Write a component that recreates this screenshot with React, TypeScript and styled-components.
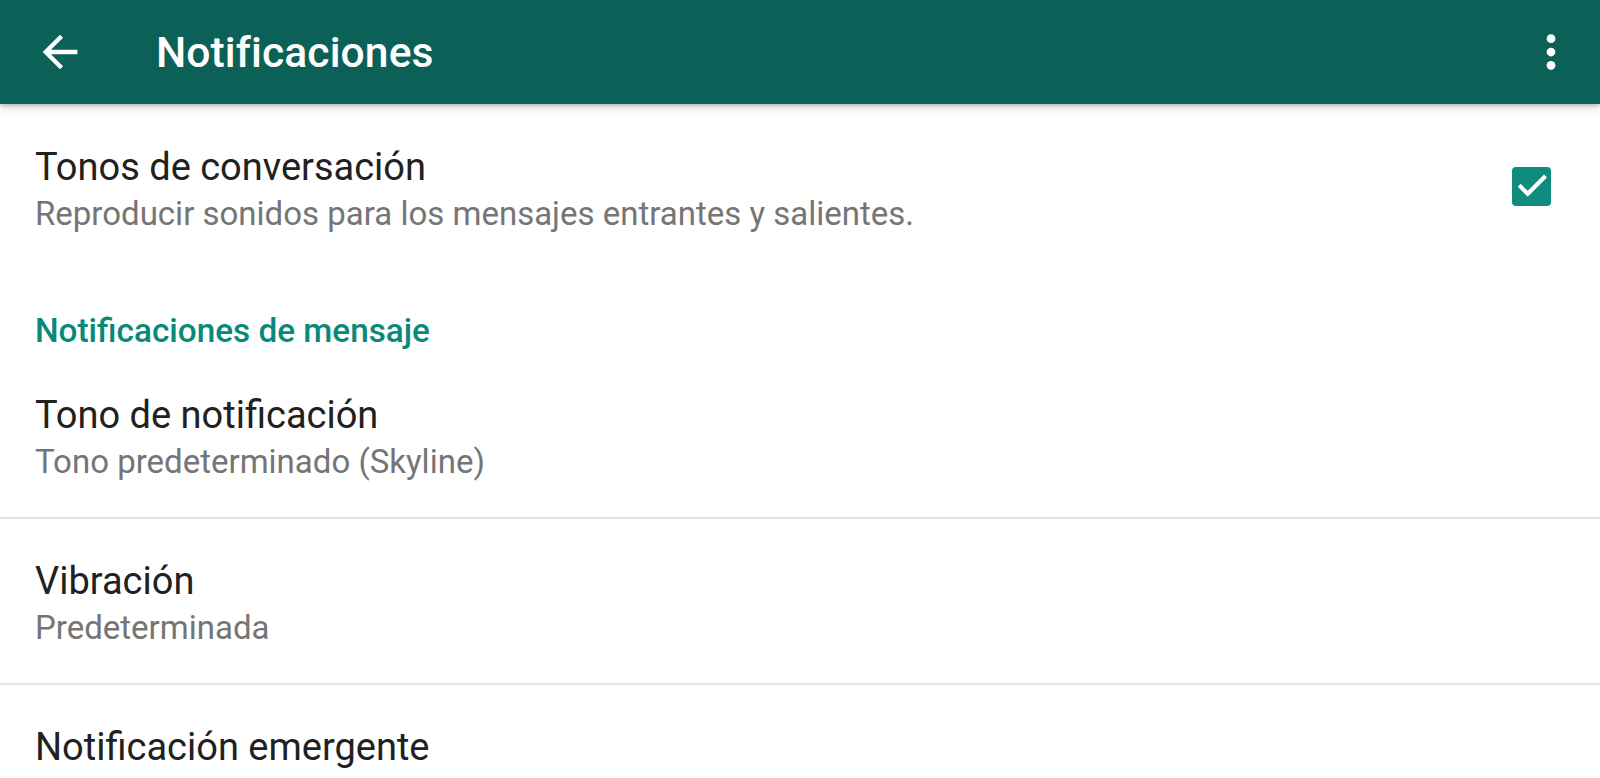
import React from 'react'
import styled, { createGlobalStyle } from 'styled-components'

const GlobalStyle = createGlobalStyle`
  html, body {
    margin: 0;
    padding: 0;
    background: #ffffff;
  }
  body {
    font-family: Roboto, 'Noto Sans', Arial, sans-serif;
    -webkit-font-smoothing: antialiased;
  }
`

const Screen = styled.div`
  width: 100%;
  height: 778px;
  overflow: hidden;
  background: #ffffff;
  display: flex;
  flex-direction: column;
`

const Toolbar = styled.header`
  height: 104px;
  flex-shrink: 0;
  background: #0b6157;
  display: flex;
  align-items: center;
  padding: 0 24px 0 34px;
  box-shadow: 0 2px 4px rgba(0, 0, 0, 0.22), 0 4px 10px rgba(0, 0, 0, 0.1);
  position: relative;
  z-index: 2;
`

const IconButton = styled.button`
  border: 0;
  background: none;
  padding: 0;
  display: flex;
  align-items: center;
  justify-content: center;
  color: #ffffff;
  cursor: pointer;
`

const Title = styled.h1`
  flex: 1;
  margin: 0 0 0 70px;
  font-size: 42.6px;
  font-weight: 500;
  color: #ffffff;
  letter-spacing: 0.1px;
`

const List = styled.div`
  display: flex;
  flex-direction: column;
`

const Row = styled.div<{ $divider?: boolean; $top?: number }>`
  display: flex;
  align-items: center;
  padding: ${(p) => p.$top ?? 40}px 49px 33px 35px;
  border-bottom: ${(p) => (p.$divider ? '2px solid #e3e3e3' : '0')};
`

const RowText = styled.div`
  flex: 1;
  display: flex;
  flex-direction: column;
`

const RowTitle = styled.div`
  font-size: 38px;
  line-height: 44px;
  color: #212121;
`

const RowSummary = styled.div`
  margin-top: 3px;
  font-size: 33px;
  line-height: 44px;
  color: #757575;
`

const Category = styled.div`
  padding: 40px 35px 0;
  font-size: 33.3px;
  line-height: 44px;
  font-weight: 500;
  color: #08897a;
`

const CheckBox = styled.div<{ $checked: boolean }>`
  width: 39px;
  height: 39px;
  margin-bottom: 9px;
  border-radius: 4px;
  background: ${(p) => (p.$checked ? '#0e8c7e' : 'transparent')};
  border: ${(p) => (p.$checked ? '0' : '3px solid #757575')};
  display: flex;
  align-items: center;
  justify-content: center;
`

const BackIcon = () => (
  <svg width="52" height="52" viewBox="0 0 24 24" fill="currentColor">
    <path d="M20 11H7.83l5.59-5.59L12 4l-8 8 8 8 1.41-1.41L7.83 13H20v-2z" />
  </svg>
)

const MoreIcon = () => (
  <svg width="50" height="50" viewBox="0 0 24 24" fill="currentColor">
    <circle cx="12" cy="5.6" r="2.1" />
    <circle cx="12" cy="12" r="2.1" />
    <circle cx="12" cy="18.4" r="2.1" />
  </svg>
)

const CheckIcon = () => (
  <svg width="34" height="34" viewBox="0 0 24 24" fill="none" stroke="#ffffff" strokeWidth="2.9" strokeLinecap="square">
    <path d="M4 12.5l5 5L20.5 6" />
  </svg>
)

export default function App() {
  return (
    <>
      <GlobalStyle />
      <Screen>
        <Toolbar>
          <IconButton aria-label="Atrás">
            <BackIcon />
          </IconButton>
          <Title>Notificaciones</Title>
          <IconButton aria-label="Más opciones">
            <MoreIcon />
          </IconButton>
        </Toolbar>
        <List>
          <Row $top={41}>
            <RowText>
              <RowTitle>Tonos de conversación</RowTitle>
              <RowSummary>Reproducir sonidos para los mensajes entrantes y salientes.</RowSummary>
            </RowText>
            <CheckBox $checked>
              <CheckIcon />
            </CheckBox>
          </Row>
          <Category>Notificaciones de mensaje</Category>
          <Row $divider>
            <RowText>
              <RowTitle>Tono de notificación</RowTitle>
              <RowSummary>Tono predeterminado (Skyline)</RowSummary>
            </RowText>
          </Row>
          <Row $divider>
            <RowText>
              <RowTitle>Vibración</RowTitle>
              <RowSummary>Predeterminada</RowSummary>
            </RowText>
          </Row>
          <Row>
            <RowText>
              <RowTitle>Notificación emergente</RowTitle>
            </RowText>
          </Row>
        </List>
      </Screen>
    </>
  )
}
